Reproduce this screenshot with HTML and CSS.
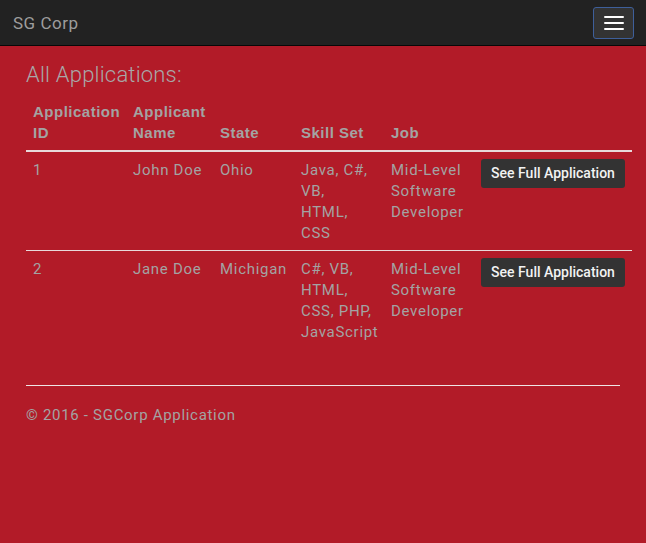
FILE: index.html
```html
<!DOCTYPE html>
<html>
<head>
<meta charset="utf-8">
<link rel="stylesheet" href="styles.css">
</head>
<body>
<nav class="navbar">
  <span class="brand">SG Corp</span>
  <button class="toggle" type="button">
    <span class="bar"></span><span class="bar"></span><span class="bar"></span>
  </button>
</nav>
<main class="content">
  <h2 class="title">All Applications:</h2>
  <table class="apps">
    <colgroup>
      <col class="c-id"><col class="c-name"><col class="c-state"><col class="c-skill"><col class="c-job"><col class="c-btn">
    </colgroup>
    <thead>
      <tr><th>Application ID</th><th>Applicant Name</th><th>State</th><th>Skill Set</th><th>Job</th><th></th></tr>
    </thead>
    <tbody>
      <tr><td>1</td><td>John Doe</td><td>Ohio</td><td class="skills">Java, C#, VB, HTML, CSS</td><td>Mid-Level Software Developer</td><td><button class="btn" type="button">See Full Application</button></td></tr>
      <tr><td>2</td><td>Jane Doe</td><td>Michigan</td><td class="skills">C#, VB, HTML, CSS, PHP, JavaScript</td><td>Mid-Level Software Developer</td><td><button class="btn" type="button">See Full Application</button></td></tr>
    </tbody>
  </table>
  <hr class="rule">
  <footer class="footer">© 2016 - SGCorp Application</footer>
</main>
</body>
</html>
```
FILE: styles.css
```css
html, body { margin: 0; padding: 0; }
body {
  background: #b21b28;
  font-family: Roboto, "Liberation Sans", sans-serif;
  color: #a3a3a3;
  font-size: 15px;
  line-height: 21px;
  height: 543px;
}
.navbar {
  height: 45px;
  background: #222222;
  border-bottom: 1px solid #080808;
  display: flex;
  align-items: center;
  justify-content: space-between;
  padding: 0 12px 0 13px;
}
.brand {
  font-size: 17px;
  color: #9d9d9d;
  letter-spacing: 0.5px;
  margin-top: 1px;
}
.toggle {
  width: 41px;
  height: 32px;
  box-sizing: border-box;
  background: #333333;
  border: 1px solid #3e5f9a;
  border-radius: 3px;
  display: flex;
  flex-direction: column;
  align-items: center;
  justify-content: center;
  gap: 4px;
  padding: 0;
  margin-top: 1px;
}
.bar {
  display: block;
  width: 20px;
  height: 2px;
  background: #ffffff;
  border-radius: 1px;
}
.content {
  padding: 0 14px 0 26px;
}
.title {
  margin: 16px 0 13px;
  font-size: 22px;
  font-weight: 300;
  line-height: 26px;
  letter-spacing: 0.2px;
  color: #a8a8a8;
}
.apps {
  width: 606px;
  border-collapse: collapse;
  table-layout: fixed;
}
.c-id { width: 100px; }
.c-name { width: 87px; }
.c-state { width: 81px; }
.c-skill { width: 90px; }
.c-job { width: 90px; }
.c-btn { width: 158px; }
.apps th {
  text-align: left;
  vertical-align: bottom;
  font-family: "Liberation Sans", Arial, sans-serif;
  font-weight: bold;
  letter-spacing: 0.5px;
  padding: 0 7px 7px;
  border-bottom: 2px solid #e8d9da;
}
.apps td {
  vertical-align: top;
  padding: 8px 7px 6px;
  letter-spacing: 0.7px;
  border-top: 1px solid #e8d9da;
}
.apps td.skills { padding-right: 11px; }
.apps tbody tr:first-child td { border-top: 0; }
.btn {
  display: block;
  width: 144px;
  height: 29px;
  background: #333333;
  color: #f2f2f2;
  border: 0;
  border-radius: 3px;
  font-family: Roboto, "Liberation Sans", sans-serif;
  font-size: 14px;
  font-weight: 500;
  letter-spacing: 0;
  padding: 0 0 2px;
  margin-top: -1px;
}
.rule {
  width: 594px;
  margin: 36px 0 0;
  border: 0;
  border-top: 1px solid #efe5e5;
  box-sizing: border-box;
}
.footer {
  margin-top: 19px;
  letter-spacing: 0.7px;
}
```
